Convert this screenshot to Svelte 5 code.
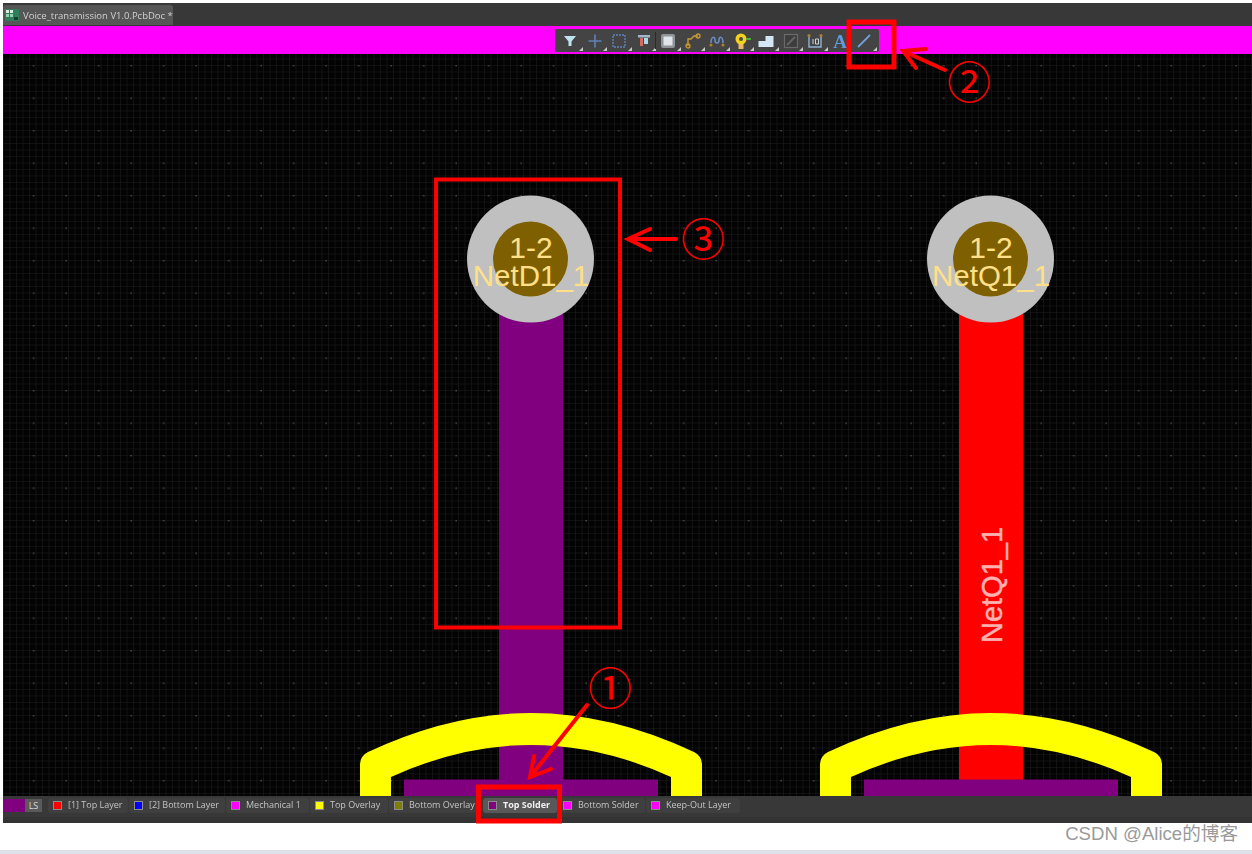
<script>
  const layers = [
    { name: '[1] Top Layer', color: '#ff0000', w: 80 },
    { name: '[2] Bottom Layer', color: '#0000ff', w: 96 },
    { name: 'Mechanical 1', color: '#ff00ff', w: 83 },
    { name: 'Top Overlay', color: '#ffff00', w: 78 },
    { name: 'Bottom Overlay', color: '#808000', w: 93 },
    { name: 'Top Solder', color: '#800080', w: 74, active: true },
    { name: 'Bottom Solder', color: '#ff00ff', w: 87 },
    { name: 'Keep-Out Layer', color: '#ff00ff', w: 94 }
  ];

  const pads = [
    { x: 531, net: 'NetD1_1', trace: '#800080' },
    { x: 991, net: 'NetQ1_1', trace: '#ff0000' }
  ];

  const tools = ['filter', 'cross', 'select', 'align', 'pad', 'route', 'tune', 'via', 'poly', 'keepout', 'dim', 'text', 'line'];
</script>

<div class="page">
  <div class="window">
    <div class="tabbar">
      <div class="tab">
        <svg class="doc-icon" viewBox="0 0 14 12" width="14" height="12">
          <rect width="14" height="12" fill="#2f7d5b" />
          <rect x="1" y="1" width="3" height="3" fill="#d7efe2" />
          <rect x="5" y="1" width="3" height="3" fill="#d7efe2" />
          <rect x="1" y="5" width="3" height="3" fill="#8fd0ae" />
          <rect x="5" y="5" width="3" height="3" fill="#8fd0ae" />
          <rect x="9" y="8" width="4" height="3" fill="#123f2d" />
        </svg>
        <span>Voice_transmission V1.0.PcbDoc *</span>
      </div>
    </div>

    <div class="toolstrip">
      <div class="toolbar">
        {#each tools as tool}
          <div class="tool" class:sep={tool === 'pad'}>
            <svg viewBox="0 0 18 18" width="18" height="18">
              {#if tool === 'filter'}
                <path d="M3 4h12l-4.5 5.5V14h-3V9.5z" fill="#bfe3ee" />
              {:else if tool === 'cross'}
                <path d="M9 2.5v13M2.5 9h13" stroke="#5f82b8" stroke-width="1.6" fill="none" />
              {:else if tool === 'select'}
                <rect x="3" y="3" width="12" height="12" fill="none" stroke="#5f82b8" stroke-width="1.4" stroke-dasharray="2 1" />
              {:else if tool === 'align'}
                <rect x="3" y="3" width="12" height="2.5" fill="#9fb7c8" />
                <rect x="5" y="6" width="3" height="8" fill="#d96a5f" />
                <rect x="9" y="6" width="4" height="6" fill="#a8d8ea" />
              {:else if tool === 'pad'}
                <rect x="2" y="2" width="14" height="14" rx="2" fill="#8f9498" />
                <rect x="4.5" y="4.5" width="9" height="9" fill="#dfe6ea" />
              {:else if tool === 'route'}
                <path d="M4 14V7h3l3-3h4" fill="none" stroke="#c99a2e" stroke-width="1.4" />
                <circle cx="4" cy="14" r="2" fill="none" stroke="#c99a2e" stroke-width="1.3" />
                <circle cx="14" cy="4" r="2" fill="none" stroke="#c99a2e" stroke-width="1.3" />
              {:else if tool === 'tune'}
                <path d="M3 11c0-7 4-7 4-3s4 4 4 0 4-4 4 3" fill="none" stroke="#6a8cc4" stroke-width="1.6" />
                <circle cx="3" cy="13" r="1.6" fill="#a9812d" />
                <circle cx="15" cy="13" r="1.6" fill="#a9812d" />
              {:else if tool === 'via'}
                <rect x="5.5" y="11" width="5" height="6" fill="#e8b56a" />
                <circle cx="8" cy="7" r="5.5" fill="#f2d21b" />
                <circle cx="8" cy="7" r="2" fill="#4a4a4a" />
                <rect x="13" y="6" width="5" height="2" fill="#4fae3c" />
              {:else if tool === 'poly'}
                <path d="M1.5 15V9h7V4h8v11z" fill="#d3e8f4" />
              {:else if tool === 'keepout'}
                <rect x="2.5" y="2.5" width="13" height="13" fill="#3d3d3d" stroke="#6a6a6a" stroke-width="1.2" />
                <path d="M5 13l8-8" stroke="#666" stroke-width="2" />
              {:else if tool === 'dim'}
                <path d="M3 4v11h12V4" fill="none" stroke="#8fb3d0" stroke-width="1.4" />
                <circle cx="3" cy="3.5" r="1.6" fill="#a9812d" />
                <circle cx="15" cy="3.5" r="1.6" fill="#a9812d" />
                <path d="M7 12V7M9.5 12V7h3v5h-3" fill="none" stroke="#cfd5d9" stroke-width="1" />
              {:else if tool === 'text'}
                <text x="9" y="15.5" text-anchor="middle" class="tool-a">A</text>
              {:else}
                <path d="M3 15L15 3" stroke="#6f9fd8" stroke-width="1.8" />
              {/if}
            </svg>
            {#if tool !== 'text'}
              <i class="corner"></i>
            {/if}
          </div>
        {/each}
      </div>
    </div>

    <div class="canvas">
      <svg viewBox="0 54 1249 742" width="1249" height="742" class="board">
        <defs>
          <pattern id="minor" width="6.5" height="6.5" patternUnits="userSpaceOnUse" x="0" y="0">
            <path d="M6.5 0H0V6.5" fill="none" stroke="#1e1e1e" stroke-width="1" />
          </pattern>
          <pattern id="major" width="32.5" height="32.5" patternUnits="userSpaceOnUse" x="0" y="0">
            <rect x="30" y="0" width="1.4" height="1.4" fill="#4f4f4f" />
          </pattern>
        </defs>
        <rect x="0" y="54" width="1249" height="742" fill="#030303" />
        <rect x="0" y="54" width="1249" height="742" fill="url(#minor)" />
        <rect x="0" y="54" width="1249" height="742" fill="url(#major)" />

        {#each pads as pad}
          <g transform="translate({pad.x - 3} 0)">
            <rect x="-32" y="300" width="64" height="496" fill={pad.trace} />
            <rect x="-127" y="779.5" width="254" height="17" fill="#800080" />
            <path
              d="M-171 796V765Q-171 756 -163 752Q-80 713 0 713Q80 713 163 752Q171 756 171 765V796H140V777Q70 745 0 745Q-70 745 -140 777V796Z"
              fill="#ffff00"
            />
            <circle cx="-0.5" cy="259" r="63.5" fill="#c0c0c0" />
            <circle cx="-0.5" cy="259" r="37.5" fill="#7f6000" />
            <text x="0" y="258" text-anchor="middle" class="pad-text">1-2</text>
            <text x="0" y="286" text-anchor="middle" class="pad-text tight">{pad.net}</text>
          </g>
        {/each}
        <text x="0" y="0" text-anchor="middle" class="net-label" transform="translate(999 585) rotate(-90)">NetQ1_1</text>
      </svg>
    </div>

    <div class="statusbar">
      <div class="ls"><b></b><span>LS</span></div>
      {#each layers as layer}
        <div class="chip" class:active={layer.active} style="width:{layer.w}px">
          <i style="background:{layer.color}"></i>
          <span>{layer.name}</span>
        </div>
      {/each}
    </div>
  </div>

  <div class="foot">CSDN @Alice的博客</div>
  <div class="edge"></div>

  <svg class="marks" viewBox="0 0 1252 854" width="1252" height="854">
    <g fill="none" stroke="#ff0000">
      <rect x="436" y="179.5" width="184" height="448" stroke-width="4" />
      <rect x="849" y="22" width="45" height="45" stroke-width="5" />
      <rect x="478.5" y="787" width="81" height="34" stroke-width="5" />
      <g stroke-width="4" stroke-linecap="round" stroke-linejoin="miter">
        <path d="M676 239H628M650 229L628 239L650 250" />
        <path d="M945 70L903 51M926 49L903 51L916 68" />
        <path d="M587 705L530 777M534 756L530 777L551 769" />
      </g>
    </g>
    <text x="703" y="256" class="num">③</text>
    <text x="969" y="99" class="num">②</text>
    <text x="610" y="705" class="num">①</text>
  </svg>
</div>

<style>
  :global(body) {
    margin: 0;
    background: #fff;
  }

  .page {
    position: relative;
    width: 1252px;
    height: 854px;
    display: flex;
    flex-direction: column;
    overflow: hidden;
    font-family: "Open Sans", "Liberation Sans", sans-serif;
  }

  .window {
    margin: 3px 0 0 3px;
    background: #383838;
  }

  .tabbar {
    height: 23px;
    padding-top: 2px;
    box-sizing: border-box;
    background: #383838;
  }

  .tab {
    width: 170px;
    height: 20px;
    box-sizing: border-box;
    padding-left: 2px;
    display: flex;
    align-items: center;
    gap: 4px;
    background: #565656;
    border-radius: 3px 3px 0 0;
    color: #d0d0d0;
    font-size: 9.5px;
    white-space: nowrap;
  }

  .tab span {
    filter: blur(0.3px);
  }

  .toolstrip {
    height: 28px;
    background: #ff00ff;
    padding-top: 3px;
    box-sizing: border-box;
    padding-left: 552px;
  }

  .toolbar {
    width: 324px;
    height: 23px;
    display: flex;
    align-items: center;
    padding-left: 3px;
    box-sizing: border-box;
    background: #444444;
    border-radius: 2px;
  }

  .tool {
    position: relative;
    width: 24.5px;
    height: 23px;
    display: flex;
    align-items: center;
    justify-content: center;
    flex: none;
  }

  .tool svg {
    filter: blur(0.4px);
  }

  .tool.sep::before {
    content: "";
    position: absolute;
    left: -1px;
    top: 3px;
    bottom: 3px;
    width: 1px;
    background: #2b2b2b;
  }

  .corner {
    position: absolute;
    right: 0;
    bottom: 1px;
    border-style: solid;
    border-width: 0 0 4px 4px;
    border-color: transparent transparent #c8c8c8 transparent;
  }

  .tool-a {
    font-family: "Liberation Serif", serif;
    font-weight: 700;
    font-size: 19px;
    fill: #5f9bd8;
  }

  .canvas {
    height: 742px;
    line-height: 0;
  }

  .board {
    display: block;
  }

  .pad-text {
    font-family: "Liberation Sans", sans-serif;
    font-size: 30px;
    fill: #ffe08a;
  }

  .pad-text.tight {
    font-size: 29.5px;
  }

  .net-label {
    font-family: "Liberation Sans", sans-serif;
    font-size: 29px;
    fill: #ffb0b0;
    stroke: #ffb0b0;
    stroke-width: 0.5px;
  }

  .statusbar {
    height: 27px;
    box-sizing: border-box;
    padding-top: 2px;
    display: flex;
    align-items: flex-start;
    gap: 1px;
    background: linear-gradient(#383838 78%, #333 78%);
  }

  .ls {
    width: 39px;
    height: 13px;
    margin-top: 1px;
    margin-right: 5px;
    display: flex;
    flex: none;
    background: #5a5a5a;
    color: #d8d8d8;
    font-size: 9px;
    line-height: 13px;
  }

  .ls b {
    width: 22px;
    background: #800080;
  }

  .ls span {
    flex: 1;
    text-align: center;
  }

  .chip {
    height: 15px;
    flex: none;
    box-sizing: border-box;
    display: flex;
    align-items: center;
    gap: 6px;
    padding-left: 5px;
    background: #3f3f3f;
    border-radius: 3px;
    color: #c4c4c4;
    font-size: 9px;
    white-space: nowrap;
  }

  .chip span {
    position: relative;
    top: -1px;
    filter: blur(0.3px);
  }

  .chip i {
    width: 7px;
    height: 7px;
    flex: none;
    border: 1px solid #8b8b8b;
  }

  .chip.active {
    background: #585858;
    color: #f0f0f0;
    font-weight: 700;
  }

  .foot {
    flex: 1;
    min-height: 0;
    display: flex;
    align-items: center;
    justify-content: flex-end;
    padding: 0 14px 5px 0;
    color: #9a9a9a;
    font-family: "Liberation Sans", "Noto Sans CJK SC", sans-serif;
    font-size: 18.6px;
    line-height: 18px;
  }

  .edge {
    height: 4px;
    flex: none;
    background: #dfe1e8;
  }

  .marks {
    position: absolute;
    left: 0;
    top: 0;
    pointer-events: none;
  }

  .num {
    font-family: "Noto Sans CJK SC", "DejaVu Sans", sans-serif;
    font-size: 44px;
    fill: #ff0000;
    text-anchor: middle;
  }
</style>
